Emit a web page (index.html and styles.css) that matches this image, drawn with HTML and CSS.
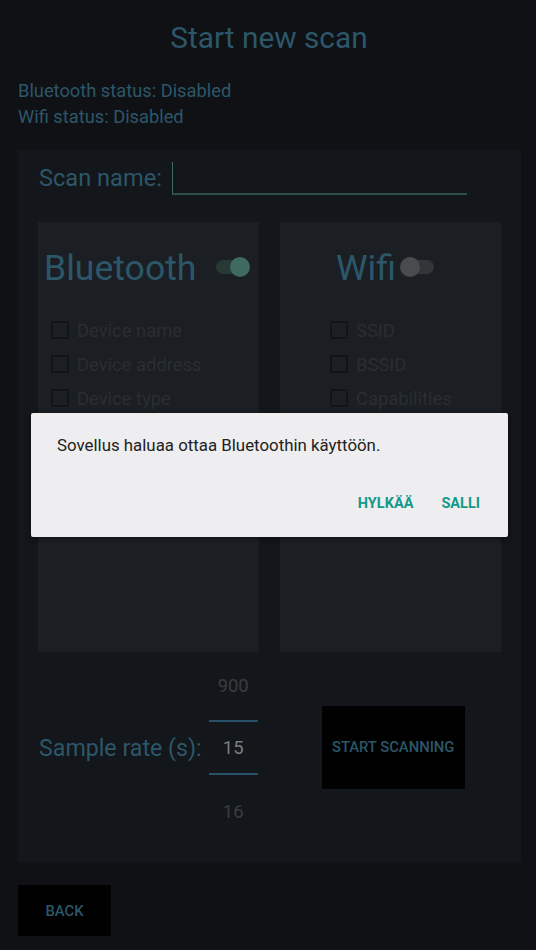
FILE: index.html
```html
<!DOCTYPE html>
<html lang="fi">
<head>
<meta charset="utf-8">
<title>Start new scan</title>
<link rel="stylesheet" href="styles.css">
</head>
<body>
<div class="screen">
  <h1 class="title">Start new scan</h1>
  <div class="status">
    <div>Bluetooth status: Disabled</div>
    <div>Wifi status: Disabled</div>
  </div>
  <div class="panel">
    <div class="name-row">
      <span class="label">Scan name:</span>
      <div class="input"><span class="cursor"></span></div>
    </div>
    <div class="cards">
      <div class="card card-bt">
        <div class="card-head">
          <span class="card-title">Bluetooth</span>
          <span class="switch on"><span class="track"></span><span class="thumb"></span></span>
        </div>
        <div class="checks">
          <div class="check"><span class="box"></span><span>Device name</span></div>
          <div class="check"><span class="box"></span><span>Device address</span></div>
          <div class="check"><span class="box"></span><span>Device type</span></div>
        </div>
      </div>
      <div class="card card-wifi">
        <div class="card-head">
          <span class="card-title">Wifi</span>
          <span class="switch off"><span class="track"></span><span class="thumb"></span></span>
        </div>
        <div class="checks">
          <div class="check"><span class="box"></span><span>SSID</span></div>
          <div class="check"><span class="box"></span><span>BSSID</span></div>
          <div class="check"><span class="box"></span><span>Capabilities</span></div>
        </div>
      </div>
    </div>
    <div class="rate-row">
      <span class="label label-rate">Sample rate (s):</span>
      <div class="picker">
        <div class="pn pn-top">900</div>
        <div class="pn-line"></div>
        <div class="pn pn-cur">15</div>
        <div class="pn-line"></div>
        <div class="pn pn-bot">16</div>
      </div>
      <button class="btn btn-start">START SCANNING</button>
    </div>
  </div>
  <button class="btn btn-back">BACK</button>

  <div class="dialog">
    <p class="dialog-text">Sovellus haluaa ottaa Bluetoothin käyttöön.</p>
    <div class="dialog-actions">
      <span class="action">HYLKÄÄ</span>
      <span class="action">SALLI</span>
    </div>
  </div>
</div>
</body>
</html>
```
FILE: styles.css
```css
* { box-sizing: border-box; }
html, body {
  margin: 0;
  padding: 0;
  background: #0f1115;
}
body {
  font-family: Roboto, "Noto Sans", sans-serif;
  color: #2c5769;
}
.screen {
  position: relative;
  width: 536px;
  height: 950px;
  padding: 0 15px 0 18px;
  border-left: 1px solid #15181c;
  margin-left: -1px;
  overflow: hidden;
}
.title {
  margin: 19px 0 0;
  font-size: 29.8px;
  font-weight: 400;
  line-height: 38px;
  text-align: center;
  color: #2c5769;
}
.status {
  margin-top: 21px;
  font-size: 18.3px;
  line-height: 26px;
}
.panel {
  margin-top: 20px;
  width: 503px;
  background: #13161a;
  padding: 11px 20px 26px 20px;
}
.label {
  font-size: 23.6px;
  line-height: 34px;
  color: #2c5769;
  white-space: nowrap;
}
.label-rate { font-size: 23.2px; }
.name-row {
  display: flex;
  align-items: center;
  height: 34px;
  padding-left: 1px;
}
.input {
  position: relative;
  margin-left: 10px;
  width: 295px;
  height: 33px;
  border-bottom: 2px solid #2d4f4b;
}
.cursor {
  position: absolute;
  left: 0;
  top: 0;
  width: 1px;
  height: 31px;
  background: #3b6a61;
}
.cards {
  margin-top: 27px;
  display: flex;
  gap: 21px;
}
.card {
  width: 221px;
  height: 430px;
  background: #1b1f24;
  padding-top: 26px;
}
.card-head {
  display: flex;
  align-items: center;
  height: 40px;
}
.card-bt .card-head { padding-left: 6px; }
.card-bt .switch { margin-left: 20px; }
.card-wifi .card-head { padding-left: 56px; }
.card-wifi .switch { margin-left: 4px; }
.card-title {
  font-size: 35.6px;
  line-height: 40px;
  color: #2c5769;
}
.switch {
  position: relative;
  width: 34px;
  height: 20px;
  margin-top: -3px;
}
.switch .track {
  position: absolute;
  top: 3px;
  height: 14px;
  width: 30px;
  border-radius: 7px;
}
.switch .thumb {
  position: absolute;
  top: 0;
  width: 20px;
  height: 20px;
  border-radius: 50%;
}
.switch.on .track { left: 0; background: #283835; }
.switch.on .thumb { right: 0; background: #3e6a5f; }
.switch.off .track { right: 0; background: #333538; }
.switch.off .thumb { left: 0; background: #4a4b4d; }
.checks {
  margin-top: 25px;
}
.check {
  display: flex;
  align-items: center;
  height: 34px;
  font-size: 18.4px;
  color: #2a2d31;
}
.card-bt .check { padding-left: 13px; }
.card-wifi .check { padding-left: 50px; }
.box {
  width: 18px;
  height: 18px;
  border: 2px solid #111418;
  border-radius: 2px;
  margin-right: 8px;
  margin-top: -1px;
}
.rate-row {
  margin-top: 8px;
  display: flex;
  align-items: center;
  padding-left: 1px;
}
.picker {
  margin-left: 7px;
  width: 49px;
  display: flex;
  flex-direction: column;
  text-align: center;
  font-size: 18.4px;
}
.pn { color: #3a3d41; }
.pn-top { height: 50px; line-height: 52px; margin-bottom: 10px; }
.pn-cur { height: 51px; line-height: 52px; color: #7b7d80; }
.pn-bot { height: 50px; line-height: 52px; margin-top: 11px; }
.pn-line { height: 2px; background: #27506a; }
.btn {
  border: 0;
  background: #010101;
  color: #2c5769;
  font-family: Roboto, "Noto Sans", sans-serif;
  font-size: 14.8px;
  font-weight: 500;
  padding: 0;
}
.btn-start {
  margin-left: 64px;
  width: 143px;
  height: 83px;
  margin-top: -2px;
}
.btn-back {
  display: block;
  margin-top: 23px;
  width: 93px;
  height: 51px;
}
.dialog {
  position: absolute;
  left: 31px;
  top: 413px;
  width: 477px;
  height: 124px;
  background: #eeeef0;
  border-radius: 2px;
  box-shadow: 0 2px 6px rgba(0,0,0,0.4);
  padding: 21px 28px 0 26px;
}
.dialog-text {
  margin: 0;
  font-size: 16.85px;
  line-height: 22px;
  color: #222222;
}
.dialog-actions {
  display: flex;
  justify-content: flex-end;
  gap: 28px;
  margin-top: 38px;
}
.action {
  font-size: 14.5px;
  font-weight: 700;
  color: #12998a;
  line-height: 20px;
}
```
